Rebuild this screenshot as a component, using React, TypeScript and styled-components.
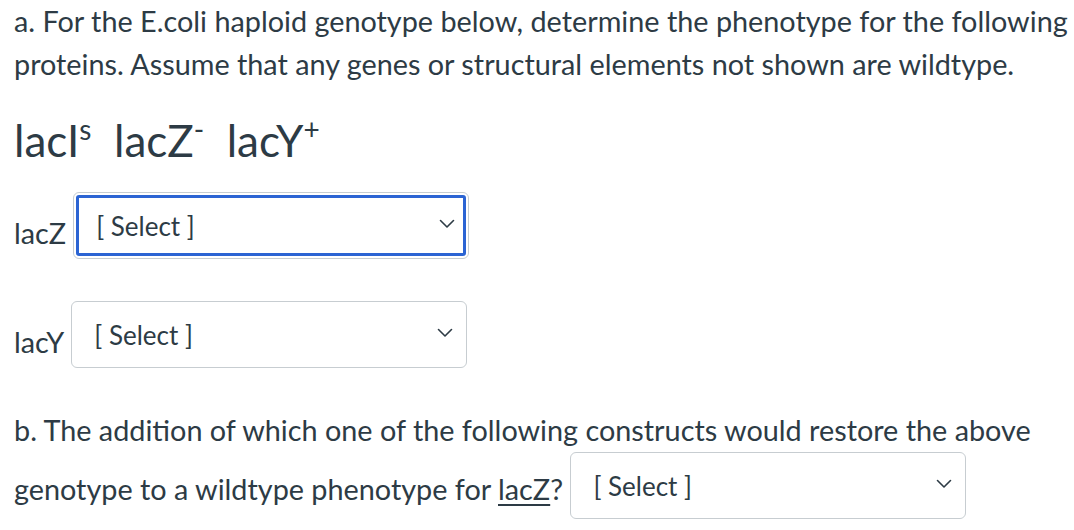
import React from "react";
import styled, { createGlobalStyle } from "styled-components";

const Global = createGlobalStyle`
  html, body { margin: 0; padding: 0; background: #fff; }
  body { font-family: Lato, "Open Sans", sans-serif; color: #2d3b45; }
`;

const Page = styled.div`
  padding: 0 4px 0 14px;
  font-size: 28.8px;
  line-height: 43px;
`;

const Para = styled.p`
  margin: 0;
`;

const Genotype = styled.p`
  margin: 24px 0 0;
  font-size: 44px;
  line-height: 60px;
  sup { font-size: 28px; line-height: 0; vertical-align: 17px; }
`;

const Row = styled.div<{ $top: number }>`
  display: flex;
  align-items: center;
  gap: 7px;
  margin-top: ${(p) => p.$top}px;
`;

const Label = styled.span`
  padding-top: 16px;
`;

const SelectBox = styled.div<{ $focused?: boolean }>`
  box-sizing: border-box;
  display: inline-flex;
  align-items: center;
  justify-content: space-between;
  width: 396px;
  height: 67px;
  padding: 0 13px 0 22px;
  border: 1px solid #c7cdd1;
  border-radius: 6px;
  background: #fff;
  font-size: 26px;
  line-height: 1;
  color: #2d3b45;
  vertical-align: 4px;
  ${(p) => (p.$focused ? `outline: 3px solid #2b64d3; outline-offset: -6px;` : ``)}
`;

const Chevron = styled.svg`
  margin-top: -4px;
`;

const ChevronIcon = () => (
  <Chevron width="16" height="10" viewBox="0 0 16 10" fill="none">
    <path d="M1.5 1.5 L8 8 L14.5 1.5" stroke="#2d3b45" strokeWidth="1.6" strokeLinecap="round" strokeLinejoin="round" />
  </Chevron>
);

const Select = ({ focused }: { focused?: boolean }) => (
  <SelectBox $focused={focused}>
    <span>[ Select ]</span>
    <ChevronIcon />
  </SelectBox>
);

const QuestionB = styled.p`
  margin: 41px 0 0;
`;

const Under = styled.span`
  text-decoration: underline;
  text-underline-offset: 4px;
  text-decoration-thickness: 1.5px;
`;

export default function App() {
  return (
    <>
      <Global />
      <Page>
        <Para>
          a. For the E.coli haploid genotype below, determine the phenotype for the following proteins. Assume
          that any genes or structural elements not shown are wildtype.
        </Para>
        <Genotype>
          lacI<sup>s</sup>&nbsp; lacZ<sup>-</sup>&nbsp; lacY<sup>+</sup>
        </Genotype>
        <Row $top={22}>
          <Label>lacZ</Label>
          <Select focused />
        </Row>
        <Row $top={42}>
          <Label>lacY</Label>
          <Select />
        </Row>
        <QuestionB>
          b. The addition of which one of the following constructs would restore the above genotype to a
          wildtype phenotype for <Under>lacZ</Under>? <Select />
        </QuestionB>
      </Page>
    </>
  );
}
